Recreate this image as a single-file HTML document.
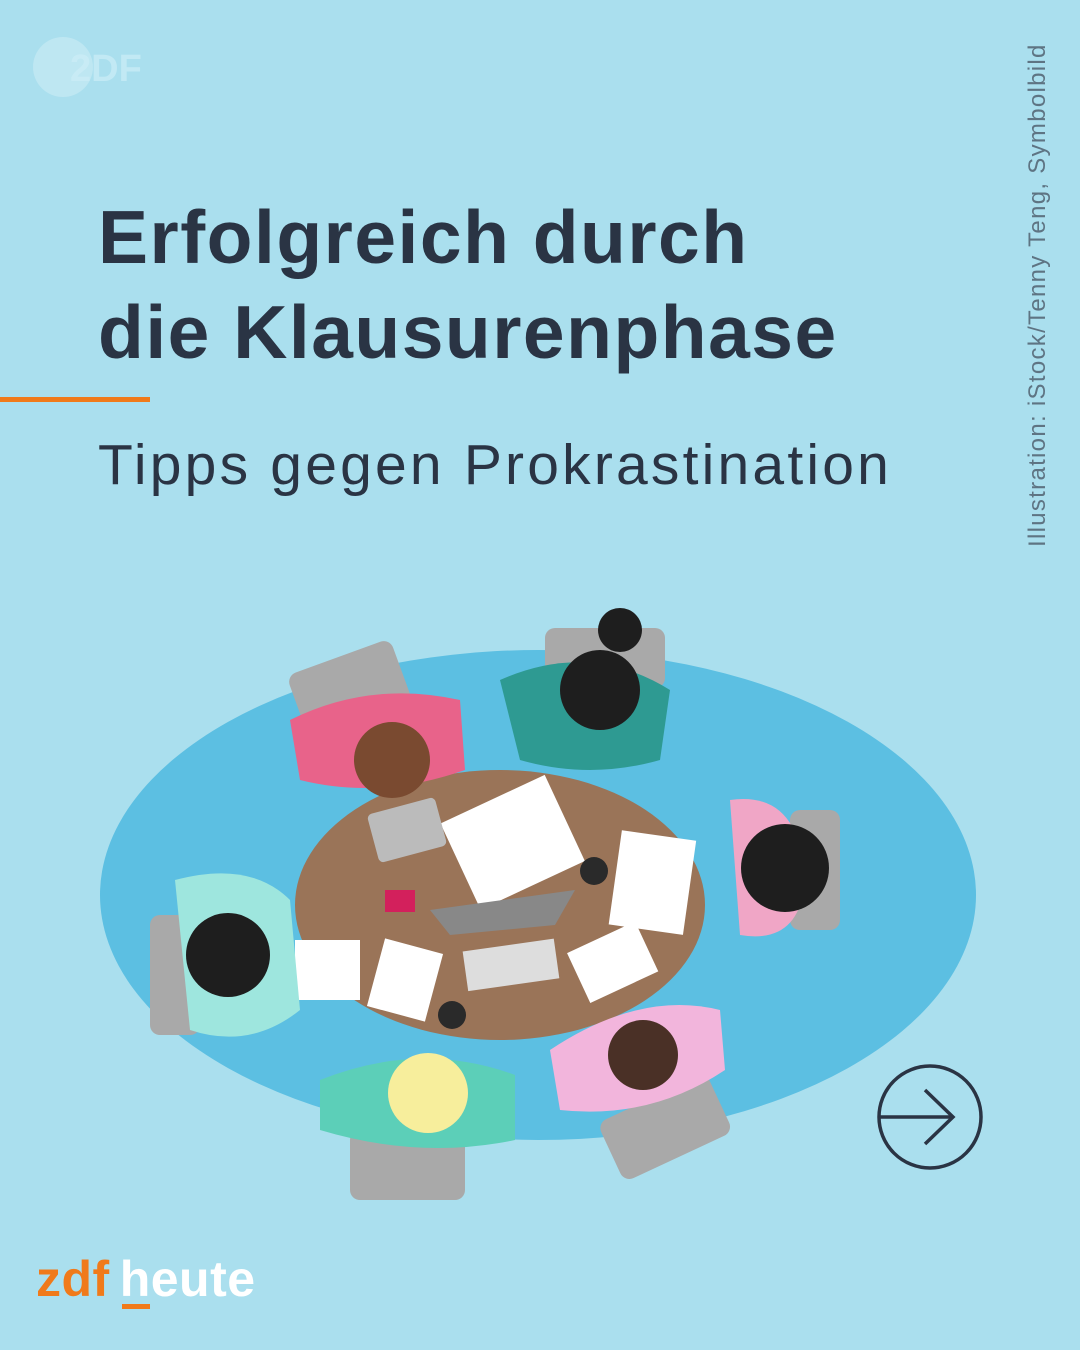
<!DOCTYPE html>
<html><head><meta charset="utf-8"><style>
body{margin:0}
#c{width:1080px;height:1350px;position:relative;overflow:hidden;background:#aadfee;font-family:"Liberation Sans",sans-serif}
h1{position:absolute;left:98px;top:190px;margin:0;font-size:75px;line-height:95px;font-weight:bold;color:#2a3444;letter-spacing:1.5px}
.sub{position:absolute;left:98px;top:432px;font-size:57px;color:#2a3444;letter-spacing:3.2px}
.bar{position:absolute;left:0;top:397px;width:150px;height:5px;background:#f07a1a}
.credit{position:absolute;left:1024px;top:547px;transform-origin:0 0;transform:rotate(-90deg);font-size:24px;color:#5e7483;white-space:nowrap;letter-spacing:1.3px}
.logo{position:absolute;left:36px;top:1250px;font-size:50px;font-weight:bold;letter-spacing:0.5px}
</style></head><body><div id="c">
<svg width="140" height="80" style="position:absolute;left:30px;top:35px">
<circle cx="33" cy="32" r="30" fill="#c6eaf4" opacity=".7"/>
<text x="40" y="46" font-family="Liberation Sans" font-weight="bold" font-size="38" fill="#cdeef7" opacity=".7">2DF</text>
</svg>
<h1>Erfolgreich durch<br>die Klausurenphase</h1>
<div class="bar"></div>
<div class="sub">Tipps gegen Prokrastination</div>
<div class="credit">Illustration: iStock/Tenny Teng, Symbolbild</div>
<svg width="1080" height="1350" style="position:absolute;left:0;top:0">
<ellipse cx="538" cy="895" rx="438" ry="245" fill="#5cbfe2"/>
<g fill="#a9a9a9">
<rect x="295" y="655" width="110" height="70" rx="10" transform="rotate(-20 350 690)"/>
<rect x="545" y="628" width="120" height="60" rx="10"/>
<rect x="790" y="810" width="50" height="120" rx="10"/>
<rect x="150" y="915" width="50" height="120" rx="10"/>
<rect x="350" y="1130" width="115" height="70" rx="10"/>
<rect x="605" y="1095" width="120" height="65" rx="10" transform="rotate(-25 665 1127)"/>
</g>
<ellipse cx="500" cy="905" rx="205" ry="135" fill="#9a7458"/>
<rect x="455" y="795" width="115" height="95" fill="#fff" transform="rotate(-25 512 842)"/>
<rect x="615" y="835" width="75" height="95" fill="#fff" transform="rotate(8 652 882)"/>
<rect x="295" y="940" width="65" height="60" fill="#fff"/>
<rect x="375" y="945" width="60" height="70" fill="#fff" transform="rotate(15 405 980)"/>
<rect x="575" y="935" width="75" height="55" fill="#fff" transform="rotate(-25 612 962)"/>
<rect x="372" y="805" width="70" height="50" rx="5" fill="#bbb" transform="rotate(-15 407 830)"/>
<path d="M430 910 L575 890 L555 925 L450 935Z" fill="#888"/>
<rect x="465" y="945" width="92" height="40" fill="#ddd" transform="rotate(-8 510 965)"/>
<rect x="385" y="890" width="30" height="22" fill="#d3205c"/>
<circle cx="594" cy="871" r="14" fill="#2a2a2a"/><circle cx="452" cy="1015" r="14" fill="#2a2a2a"/>
<path d="M290 720 Q370 680 460 700 L465 770 Q380 800 300 780Z" fill="#e8638a"/>
<circle cx="392" cy="760" r="38" fill="#7a4a30"/>
<path d="M500 680 Q590 640 670 690 L660 760 Q590 780 520 760Z" fill="#2e9a92"/>
<circle cx="600" cy="690" r="40" fill="#1e1e1e"/><circle cx="620" cy="630" r="22" fill="#1e1e1e"/>
<path d="M730 800 Q800 790 805 880 Q800 945 740 935Z" fill="#f0a6c6"/>
<circle cx="785" cy="868" r="44" fill="#1e1e1e"/>
<path d="M175 880 Q250 860 290 900 L300 1010 Q250 1050 190 1030Z" fill="#9ee6de"/>
<circle cx="228" cy="955" r="42" fill="#1e1e1e"/>
<path d="M320 1080 Q420 1040 515 1075 L515 1140 Q420 1160 320 1130Z" fill="#5ccfb8"/>
<circle cx="428" cy="1093" r="40" fill="#f7ee9c"/>
<path d="M550 1050 Q640 990 720 1010 L725 1070 Q650 1120 560 1110Z" fill="#f2b5dc"/>
<circle cx="643" cy="1055" r="35" fill="#4a3026"/>
<circle cx="930" cy="1117" r="51" fill="none" stroke="#2a3444" stroke-width="3.5"/>
<path d="M880 1117 H953 M925 1090 L953 1117 L925 1144" fill="none" stroke="#2a3444" stroke-width="3.5"/>
</svg>
<div class="logo"><span style="color:#f07a1a">zdf</span><span style="color:#fff;margin-left:10px">heute</span></div>
<div style="position:absolute;left:122px;top:1304px;width:28px;height:5px;background:#f07a1a"></div>
</div></body></html>
